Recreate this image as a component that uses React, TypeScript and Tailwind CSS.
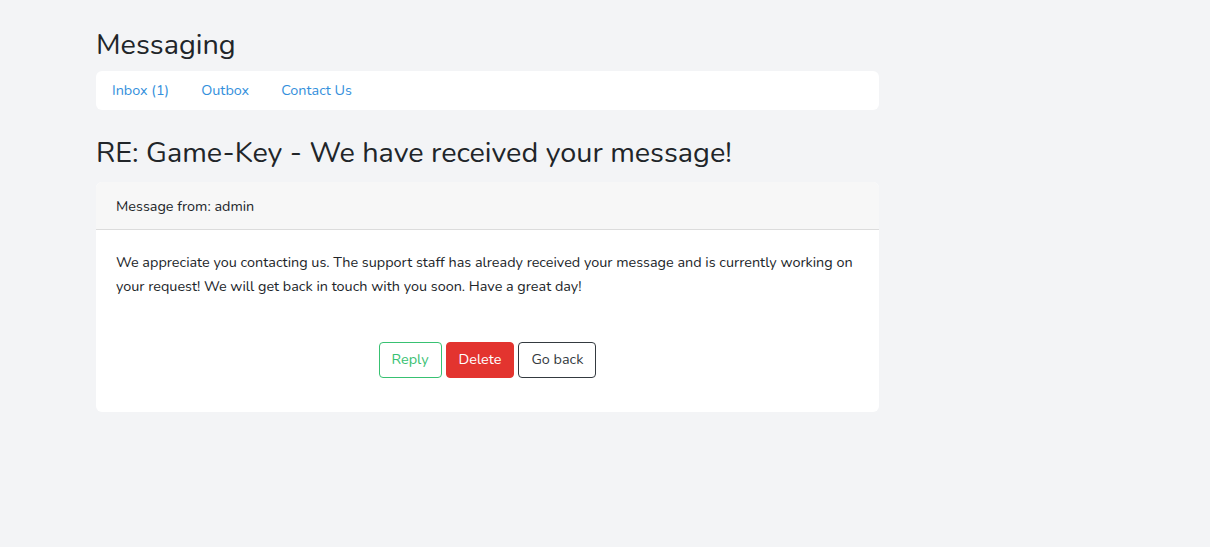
export default function App() {
  return (
    <div
      className="min-h-[547px] bg-[#f3f4f6] text-[#212529]"
      style={{ fontFamily: "Nunito, Lato, 'Noto Sans', sans-serif" }}
    >
      <div className="ml-[96px] w-[783px] pt-[28px]">
        <h2 className="mb-[8px] text-[28.8px] leading-[1.2]">Messaging</h2>
        <nav className="flex h-[39px] items-center rounded-md bg-white pt-[2px] text-[14.4px] text-[#3490dc]">
          <a className="px-4">Inbox (1)</a>
          <a className="px-4">Outbox</a>
          <a className="px-4">Contact Us</a>
        </nav>

        <h2 className="mt-[26px] mb-[12px] text-[28.8px] leading-[1.2]">
          RE: Game-Key - We have received your message!
        </h2>
        <div className="overflow-hidden rounded-md bg-white">
          <div className="flex h-[48px] items-center border-b border-[#dcdcdc] bg-[#f7f7f7] px-5 pt-[2px] text-[14.4px]">
            Message from: admin
          </div>
          <div className="px-5 pt-[20px] pb-[34px]">
            <p className="text-[14.4px] leading-[24px]">
              We appreciate you contacting us. The support staff has already
              received your message and is currently working on your request!
              We will get back in touch with you soon. Have a great day!
            </p>
            <div className="mt-[44px] flex justify-center gap-1 text-[14.4px]">
              <button className="h-[36px] rounded border border-[#38c172] px-3 text-[#38c172]">
                Reply
              </button>
              <button className="h-[36px] rounded border border-[#e3342f] bg-[#e3342f] px-3 text-white">
                Delete
              </button>
              <button className="h-[36px] rounded border border-[#343a40] px-3 text-[#343a40]">
                Go back
              </button>
            </div>
          </div>
        </div>
      </div>
    </div>
  );
}
